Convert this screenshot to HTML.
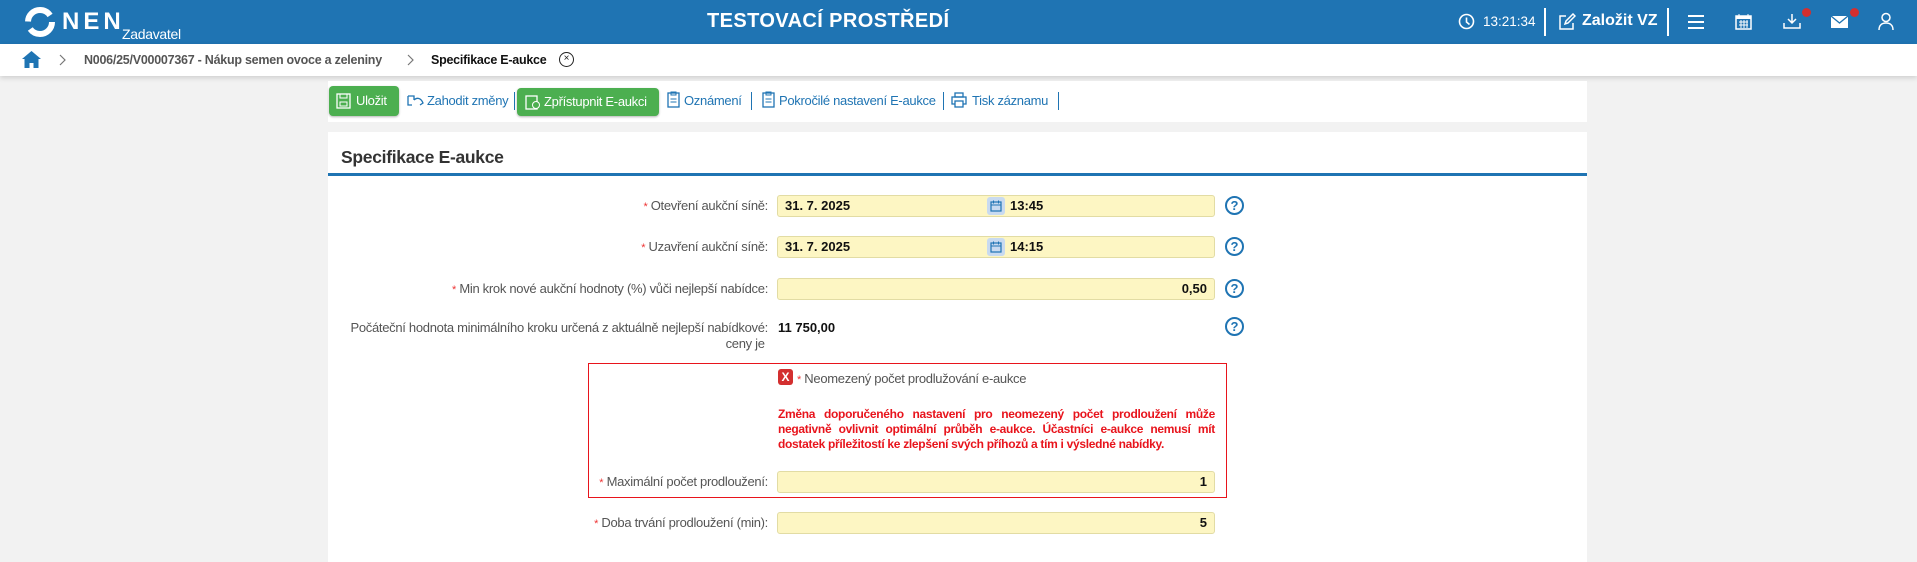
<!DOCTYPE html>
<html><head><meta charset="utf-8"><style>
*{margin:0;padding:0;box-sizing:border-box}
body{width:1917px;height:550px;overflow:hidden;background:#f2f2f2;font-family:"Liberation Sans",sans-serif;position:relative;color:#555}
.a{position:absolute}
#hdr{left:0;top:0;width:1917px;height:44px;background:#1f74b3;color:#fff}
#bc{left:0;top:44px;width:1917px;height:32px;background:#fff;box-shadow:0 2px 5px rgba(0,0,0,.15)}
.panel{background:#fff}
.lbl{font-size:13px;letter-spacing:-0.3px;color:#555;text-align:right;width:440px;left:328px;white-space:nowrap}
.req{color:#e33;font-size:11px}
.inp{left:777px;width:438px;height:22px;background:#fdf6c3;border:1px solid #e2dca4;border-radius:3px;font-size:13px;color:#111;font-weight:bold;line-height:20px;padding:0 7px}
.help{width:19px;height:19px;border:2px solid #1f74b3;border-radius:50%;color:#1f74b3;font-weight:bold;font-size:13px;text-align:center;line-height:15px;left:1225px}
.tb{font-size:13px;letter-spacing:-0.3px;color:#1f74b3;top:93px;white-space:nowrap}
.sep{width:1px;height:18px;background:#1f74b3;top:92px}
.btn{background:#4caf50;color:#fff;border-radius:4px;font-size:13px;letter-spacing:-0.3px;height:30px;line-height:30px;box-shadow:0 1px 2px rgba(0,0,0,.3);white-space:nowrap}
</style></head><body>
<div id="hdr" class="a">
 <svg class="a" style="left:24px;top:6px" width="32" height="32" viewBox="0 0 32 32"><circle cx="16" cy="16" r="12" fill="none" stroke="#fff" stroke-width="6" stroke-dasharray="30 8"/></svg>
 <div class="a" style="left:62px;top:8px;font-size:24px;font-weight:bold;letter-spacing:4px">NEN</div>
 <div class="a" style="left:122px;top:26px;font-size:14px;letter-spacing:-0.3px">Zadavatel</div>
 <div class="a" style="left:707px;top:10px;font-size:20px;font-weight:bold;letter-spacing:.4px">TESTOVACÍ PROSTŘEDÍ</div>
 <svg class="a" style="left:1458px;top:13px" width="17" height="17" viewBox="0 0 17 17"><circle cx="8.5" cy="8.5" r="7" fill="none" stroke="#fff" stroke-width="1.6"/><path d="M8.5 4.5V9l3 2.5" fill="none" stroke="#fff" stroke-width="1.6"/></svg>
 <div class="a" style="left:1483px;top:14px;font-size:13.5px">13:21:34</div>
 <div class="a" style="left:1544px;top:8px;width:2px;height:28px;background:#fff"></div>
 <svg class="a" style="left:1558px;top:13px" width="18" height="18" viewBox="0 0 18 18"><path d="M8 3H2v13h13V10" fill="none" stroke="#fff" stroke-width="1.5"/><path d="M7 11l1-3 7-7 2 2-7 7z" fill="none" stroke="#fff" stroke-width="1.5"/></svg>
 <div class="a" style="left:1582px;top:12px;font-size:16px;font-weight:bold">Založit VZ</div>
 <div class="a" style="left:1667px;top:8px;width:2px;height:28px;background:#fff"></div>
 <div class="a" style="left:1688px;top:15px;width:16px;height:2px;background:#fff;box-shadow:0 6px 0 #fff,0 12px 0 #fff"></div>
 <svg class="a" style="left:1735px;top:13px" width="17" height="17" viewBox="0 0 17 17"><rect x="1" y="3" width="15" height="13" fill="none" stroke="#fff" stroke-width="1.5"/><rect x="1" y="3" width="15" height="3" fill="#fff"/><path d="M4 1v4M13 1v4M4 9h9M4 12h9M6 7v8M9 7v8M12 7v8" stroke="#fff" stroke-width="1"/></svg>
 <svg class="a" style="left:1783px;top:13px" width="18" height="17" viewBox="0 0 18 17"><path d="M9 1v9M5 6l4 4 4-4M1 10v5h16v-5" fill="none" stroke="#fff" stroke-width="1.5"/></svg>
 <div class="a" style="left:1802px;top:8px;width:9px;height:9px;border-radius:50%;background:#d32f2f"></div>
 <svg class="a" style="left:1831px;top:16px" width="17" height="12" viewBox="0 0 17 12"><rect width="17" height="12" fill="#fff"/><path d="M0 0l8.5 7L17 0" fill="none" stroke="#1f74b3" stroke-width="1.3"/></svg>
 <div class="a" style="left:1850px;top:8px;width:9px;height:9px;border-radius:50%;background:#d32f2f"></div>
 <svg class="a" style="left:1878px;top:12px" width="16" height="18" viewBox="0 0 16 18"><circle cx="8" cy="5.5" r="4" fill="none" stroke="#fff" stroke-width="1.5"/><path d="M1 18c0-5 3-7 7-7s7 2 7 7" fill="none" stroke="#fff" stroke-width="1.5"/></svg>
</div>
<div id="bc" class="a">
 <svg class="a" style="left:22px;top:7px" width="19" height="17" viewBox="0 0 19 17"><path d="M9.5 0L0 8h2.5v9h5v-5h4v5h5V8H19z" fill="#1f74b3"/></svg>
 <svg class="a" style="left:59px;top:10px" width="7" height="12" viewBox="0 0 7 12"><path d="M1 1l5 5-5 5" fill="none" stroke="#777" stroke-width="1.2"/></svg>
 <div class="a" style="left:84px;top:9px;font-size:12.5px;letter-spacing:-0.25px;font-weight:bold;color:#555;white-space:nowrap">N006/25/V00007367 - Nákup semen ovoce a zeleniny</div>
 <svg class="a" style="left:407px;top:10px" width="7" height="12" viewBox="0 0 7 12"><path d="M1 1l5 5-5 5" fill="none" stroke="#777" stroke-width="1.2"/></svg>
 <div class="a" style="left:431px;top:9px;font-size:12.5px;letter-spacing:-0.25px;font-weight:bold;color:#111;white-space:nowrap">Specifikace E-aukce</div>
 <div class="a" style="left:559px;top:8px;width:15px;height:15px;border:1.5px solid #222;border-radius:50%;font-size:10px;text-align:center;line-height:12px;color:#222">×</div>
</div>
<div class="a panel" style="left:328px;top:81px;width:1259px;height:41px"></div>
<div class="a btn" style="left:329px;top:86px;width:70px;padding-left:27px">Uložit
 <svg class="a" style="left:7px;top:7px" width="15" height="16" viewBox="0 0 15 16"><rect x="1" y="1" width="13" height="14" fill="none" stroke="#fff" stroke-width="1.3"/><rect x="4" y="1" width="7" height="4" fill="none" stroke="#fff"/><rect x="4" y="9" width="7" height="4" fill="none" stroke="#fff"/></svg></div>
<svg class="a" style="left:407px;top:94px" width="17" height="13" viewBox="0 0 17 13"><path d="M1 2h6v4M1 2v9h4M7 6c3-3 7-2 9 3l-3 2" fill="none" stroke="#1f74b3" stroke-width="1.3"/></svg>
<div class="a tb" style="left:427px">Zahodit změny</div>
<div class="a sep" style="left:514px"></div>
<div class="a btn" style="left:517px;top:88px;width:142px;height:28px;line-height:28px;padding-left:27px">Zpřístupnit E-aukci
 <svg class="a" style="left:8px;top:6px" width="15" height="16" viewBox="0 0 15 16"><rect x="1" y="2" width="11" height="13" fill="none" stroke="#fff" stroke-width="1.3"/><circle cx="11" cy="11" r="3.5" fill="#4caf50" stroke="#fff"/></svg></div>
<svg class="a" style="left:667px;top:91px" width="13" height="17" viewBox="0 0 13 17"><rect x="1" y="2" width="11" height="14" fill="none" stroke="#1f74b3" stroke-width="1.3"/><path d="M4 1h5v3H4zM3.5 8h6M3.5 11h6" stroke="#1f74b3" fill="none"/></svg>
<div class="a tb" style="left:684px">Oznámení</div>
<div class="a sep" style="left:751px"></div>
<svg class="a" style="left:762px;top:91px" width="13" height="17" viewBox="0 0 13 17"><rect x="1" y="2" width="11" height="14" fill="none" stroke="#1f74b3" stroke-width="1.3"/><path d="M4 1h5v3H4zM3.5 8h6M3.5 11h6" stroke="#1f74b3" fill="none"/></svg>
<div class="a tb" style="left:779px">Pokročilé nastavení E-aukce</div>
<div class="a sep" style="left:943px"></div>
<svg class="a" style="left:951px;top:92px" width="16" height="16" viewBox="0 0 16 16"><rect x="4" y="1" width="8" height="4" fill="none" stroke="#1f74b3" stroke-width="1.3"/><rect x="1" y="5" width="14" height="7" fill="none" stroke="#1f74b3" stroke-width="1.3"/><rect x="4" y="9" width="8" height="6" fill="#fff" stroke="#1f74b3" stroke-width="1.3"/></svg>
<div class="a tb" style="left:972px">Tisk záznamu</div>
<div class="a sep" style="left:1058px"></div>

<div class="a panel" style="left:328px;top:132px;width:1259px;height:430px"></div>
<div class="a" style="left:341px;top:147px;font-size:17.5px;letter-spacing:-0.3px;font-weight:bold;color:#333">Specifikace E-aukce</div>
<div class="a" style="left:328px;top:173px;width:1259px;height:3px;background:#1f74b3"></div>

<div class="a lbl" style="top:198px"><span class="req">*</span> Otevření aukční síně:</div>
<div class="a inp" style="top:195px">31. 7. 2025<span class="a" style="left:209px;top:1px;width:18px;height:18px;background:#c8daf0;border-radius:3px"></span><svg class="a" style="left:212px;top:4px" width="12" height="12" viewBox="0 0 12 12"><rect x="1" y="2" width="10" height="9" fill="none" stroke="#1f74b3" stroke-width="1.2"/><path d="M1 5h10M3.5 0.5v3M8.5 0.5v3" stroke="#1f74b3"/></svg><span class="a" style="left:232px">13:45</span></div>
<div class="a help" style="top:196px">?</div>

<div class="a lbl" style="top:239px"><span class="req">*</span> Uzavření aukční síně:</div>
<div class="a inp" style="top:236px">31. 7. 2025<span class="a" style="left:209px;top:1px;width:18px;height:18px;background:#c8daf0;border-radius:3px"></span><svg class="a" style="left:212px;top:4px" width="12" height="12" viewBox="0 0 12 12"><rect x="1" y="2" width="10" height="9" fill="none" stroke="#1f74b3" stroke-width="1.2"/><path d="M1 5h10M3.5 0.5v3M8.5 0.5v3" stroke="#1f74b3"/></svg><span class="a" style="left:232px">14:15</span></div>
<div class="a help" style="top:237px">?</div>

<div class="a lbl" style="top:281px"><span class="req">*</span> Min krok nové aukční hodnoty (%) vůči nejlepší nabídce:</div>
<div class="a inp" style="top:278px;text-align:right">0,50</div>
<div class="a help" style="top:279px">?</div>

<div class="a lbl" style="top:320px;line-height:16px">Počáteční hodnota minimálního kroku určená z aktuálně nejlepší nabídkové:<br>ceny je&nbsp;</div>
<div class="a" style="left:778px;top:320px;font-size:13px;font-weight:bold;color:#111">11 750,00</div>
<div class="a help" style="top:317px">?</div>

<div class="a" style="left:588px;top:363px;width:639px;height:135px;border:1px solid #e8141c"></div>
<div class="a" style="left:778px;top:369px;width:15px;height:16px;background:#d32f2f;border-radius:3px;color:#fff;font-size:12px;font-weight:bold;text-align:center;line-height:16px">X</div>
<div class="a" style="left:797px;top:371px;font-size:13px;letter-spacing:-0.3px"><span class="req">*</span> Neomezený počet prodlužování e-aukce</div>
<div class="a" style="left:778px;top:407px;width:437px;font-size:12px;letter-spacing:-0.3px;font-weight:bold;color:#e8141c;line-height:15px;text-align:justify">Změna doporučeného nastavení pro neomezený počet prodloužení může negativně ovlivnit optimální průběh e-aukce. Účastníci e-aukce nemusí mít dostatek příležitostí ke zlepšení svých příhozů a tím i výsledné nabídky.</div>
<div class="a lbl" style="top:474px"><span class="req">*</span> Maximální počet prodloužení:</div>
<div class="a inp" style="top:471px;text-align:right">1</div>

<div class="a lbl" style="top:515px"><span class="req">*</span> Doba trvání prodloužení (min):</div>
<div class="a inp" style="top:512px;text-align:right">5</div>
</body></html>
